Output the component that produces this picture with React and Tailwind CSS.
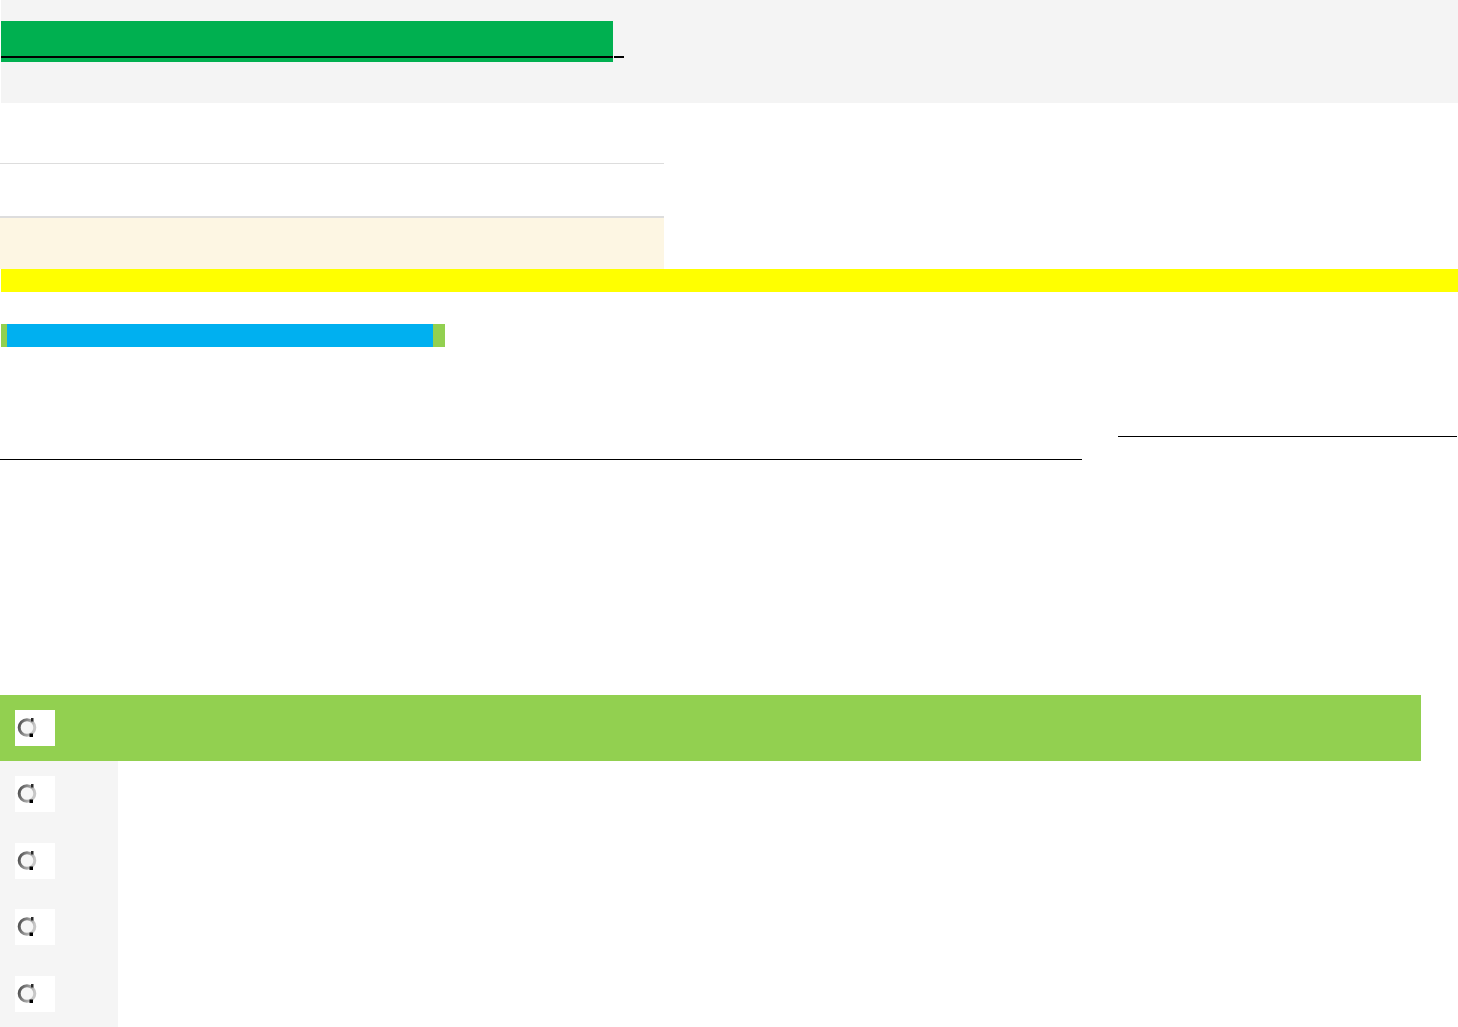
function Spinner() {
  return (
    <svg width="20" height="21" viewBox="0 0 20 21" className="block">
      <defs>
        <linearGradient id="ring" x1="0" y1="0" x2="1" y2="0.3">
          <stop offset="0" stopColor="#4a4a4a" />
          <stop offset="0.5" stopColor="#8c8c8c" />
          <stop offset="1" stopColor="#c8c8c8" />
        </linearGradient>
      </defs>
      <circle cx="10" cy="10.5" r="7.8" fill="#f6f6f6" stroke="url(#ring)" strokeWidth="3" />
      <rect x="14" y="1" width="2.5" height="3.5" fill="#2a2a2a" />
      <rect x="12.5" y="16.5" width="3.5" height="3.5" fill="#000" />
    </svg>
  )
}

function CheckRow({ active }) {
  return (
    <div className={active ? "h-[66px] w-[1421px] bg-[#92d050] pl-[15px] pt-[15px]" : "h-[66.5px] pl-[15px] pt-[15px]"}>
      <div className="h-[36px] w-[40px] bg-white pl-[2px] pt-[7px]">
        <Spinner />
      </div>
    </div>
  )
}

export default function App() {
  const rows = [1, 2, 3, 4]

  return (
    <div className="min-h-[1027px] bg-white font-['Liberation_Sans',sans-serif]">
      {/* header band */}
      <div className="ml-[1px] h-[103px] bg-[#f4f4f4] pt-[21px]">
        <div className="flex items-start">
          <div className="h-[41px] w-[612px] bg-[#00b050] pt-[35px]">
            <div className="h-[2px] w-full bg-black" />
          </div>
          <div className="ml-[1px] mt-[35px] h-[2px] w-[10px] bg-black" />
        </div>
      </div>

      {/* bordered panel */}
      <div className="w-[664px]">
        <div className="h-[61px] border-b border-[#dddddd]" />
        <div className="h-[54px] border-b-2 border-[#dddddd]" />
        <div className="h-[51px] bg-[#fdf6e3]" />
      </div>

      <div className="ml-[1px] h-[23px] bg-[#ffff00]" />

      {/* progress bar */}
      <div className="ml-[1px] mt-[32px] flex h-[23px] w-[444px] bg-[#92d050] px-[6px] pr-[12px]">
        <div className="h-full flex-1 bg-[#00b0f0]" />
      </div>

      {/* rules */}
      <div className="flex items-start">
        <div className="h-[113px] w-[1082px] border-b border-black" />
        <div className="ml-[36px] h-[90px] w-[339px] border-b border-black" />
      </div>

      {/* list */}
      <div className="mt-[235px]">
        <CheckRow active />
        <div className="w-[118px] bg-[#f5f5f5] pb-[2px]">
          {rows.map((r) => (
            <CheckRow key={r} />
          ))}
        </div>
      </div>
    </div>
  )
}
